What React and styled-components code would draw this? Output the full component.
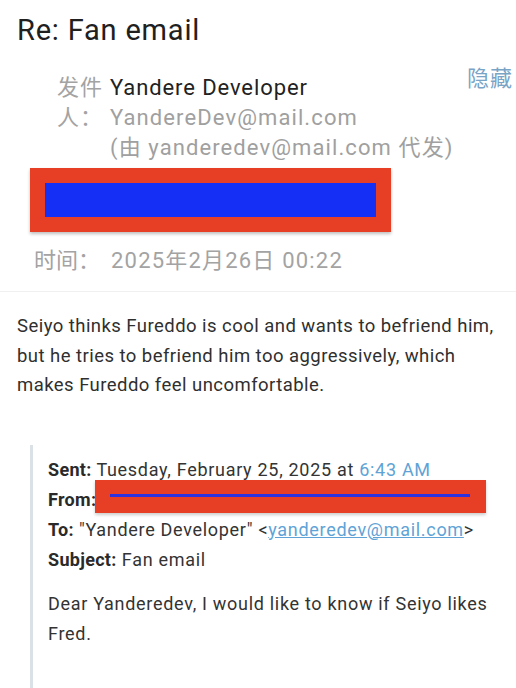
import React from "react";
import styled, { createGlobalStyle } from "styled-components";

const Global = createGlobalStyle`
  html, body { margin: 0; padding: 0; background: #fff; }
  body { font-family: Roboto, "Noto Sans CJK SC", "Noto Sans", sans-serif; }
  * { box-sizing: border-box; }
`;

const Page = styled.div`
  width: 516px;
  height: 688px;
  overflow: hidden;
  background: #fff;
  padding-top: 13px;
`;

const Title = styled.h1`
  margin: 0 0 0 17px;
  font-size: 29px;
  line-height: 34px;
  letter-spacing: 0.8px;
  font-weight: 400;
  color: #202020;
`;

const SenderRow = styled.div`
  display: flex;
  margin-top: 26px;
  padding-left: 57px;
  padding-right: 3px;
`;

const Labels = styled.div`
  display: flex;
  flex-direction: column;
  width: 53px;
  flex: none;
`;

const Label = styled.span`
  font-size: 22px;
  line-height: 30px;
  letter-spacing: 1px;
  color: #a3a3a3;
  white-space: nowrap;
`;

const Values = styled.div`
  display: flex;
  flex-direction: column;
  flex: 1;
`;

const Line = styled.span`
  font-size: 22px;
  line-height: 30px;
  letter-spacing: ${(p) => (p.$strong ? "0.9px" : "1.1px")};
  white-space: nowrap;
  color: ${(p) => (p.$strong ? "#222" : "#a0a0a0")};
`;

const HideLink = styled.span`
  font-size: 22px;
  line-height: 24px;
  letter-spacing: 1px;
  margin-top: -6px;
  color: #7aa4c6;
  align-self: flex-start;
`;

const Redact = styled.div`
  margin: 5px 0 0 30px;
  width: 361px;
  height: 64px;
  background: #e63f26;
  padding: 15px;
  box-shadow: 0 2px 3px rgba(0, 0, 0, 0.25);
`;

const RedactBar = styled.div`
  width: 100%;
  height: 100%;
  background: #1530f4;
`;

const TimeRow = styled.div`
  display: flex;
  margin: 14px 0 0 34px;
  font-size: 22px;
  line-height: 30px;
  color: #a3a3a3;
  white-space: nowrap;
`;

const TimeLabel = styled.span`
  width: 77px;
  flex: none;
`;

const TimeValue = styled.span`
  letter-spacing: 1.2px;
`;

const Divider = styled.div`
  margin-top: 15px;
  height: 1px;
  background: #f0f0f0;
`;

const Body = styled.p`
  margin: 20px 0 0 17px;
  font-size: 18.5px;
  line-height: 29.5px;
  letter-spacing: 0.45px;
  color: #2f2f2f;
  width: 496px;
`;

const Quote = styled.div`
  margin: 44px 0 0 30px;
  border-left: 3px solid #dbe2e7;
  padding: 10px 0 60px 15px;
  color: #333;
  font-size: 18px;
  line-height: 30px;
  letter-spacing: 0.7px;
`;

const Field = styled.div`
  position: relative;
  white-space: nowrap;
`;

const Key = styled.b`
  font-weight: 700;
  color: #2a2a2a;
  letter-spacing: 0.3px;
`;

const Link = styled.span`
  color: #5fa3d6;
  text-decoration: ${(p) => (p.$underline ? "underline" : "none")};
`;

const Overlay = styled.div`
  position: absolute;
  left: 47px;
  top: -5px;
  width: 391px;
  height: 33px;
  background: #e63f26;
  padding: 14px 16px 0 15px;
  box-shadow: 0 2px 3px rgba(0, 0, 0, 0.2);
`;

const OverlayLine = styled.div`
  height: 3px;
  background: #2a32e0;
`;

const QuoteBody = styled.p`
  margin: 14px 0 0 0;
  width: 455px;
`;

export default function App() {
  return (
    <Page>
      <Global />
      <Title>Re: Fan email</Title>
      <SenderRow>
        <Labels>
          <Label>发件</Label>
          <Label>人：</Label>
        </Labels>
        <Values>
          <Line $strong>Yandere Developer</Line>
          <Line>YandereDev@mail.com</Line>
          <Line>(由 yanderedev@mail.com 代发)</Line>
        </Values>
        <HideLink>隐藏</HideLink>
      </SenderRow>
      <Redact>
        <RedactBar />
      </Redact>
      <TimeRow>
        <TimeLabel>时间：</TimeLabel>
        <TimeValue>2025年2月26日 00:22</TimeValue>
      </TimeRow>
      <Divider />
      <Body>
        Seiyo thinks Fureddo is cool and wants to befriend him, but he tries to
        befriend him too aggressively, which makes Fureddo feel uncomfortable.
      </Body>
      <Quote>
        <Field>
          <Key>Sent:</Key> Tuesday, February 25, 2025 at <Link>6:43 AM</Link>
        </Field>
        <Field>
          <Key>From:</Key>
          <Overlay>
            <OverlayLine />
          </Overlay>
        </Field>
        <Field>
          <Key>To:</Key> "Yandere Developer" &lt;
          <Link $underline>yanderedev@mail.com</Link>&gt;
        </Field>
        <Field>
          <Key>Subject:</Key> Fan email
        </Field>
        <QuoteBody>
          Dear Yanderedev, I would like to know if Seiyo likes Fred.
        </QuoteBody>
      </Quote>
    </Page>
  );
}
